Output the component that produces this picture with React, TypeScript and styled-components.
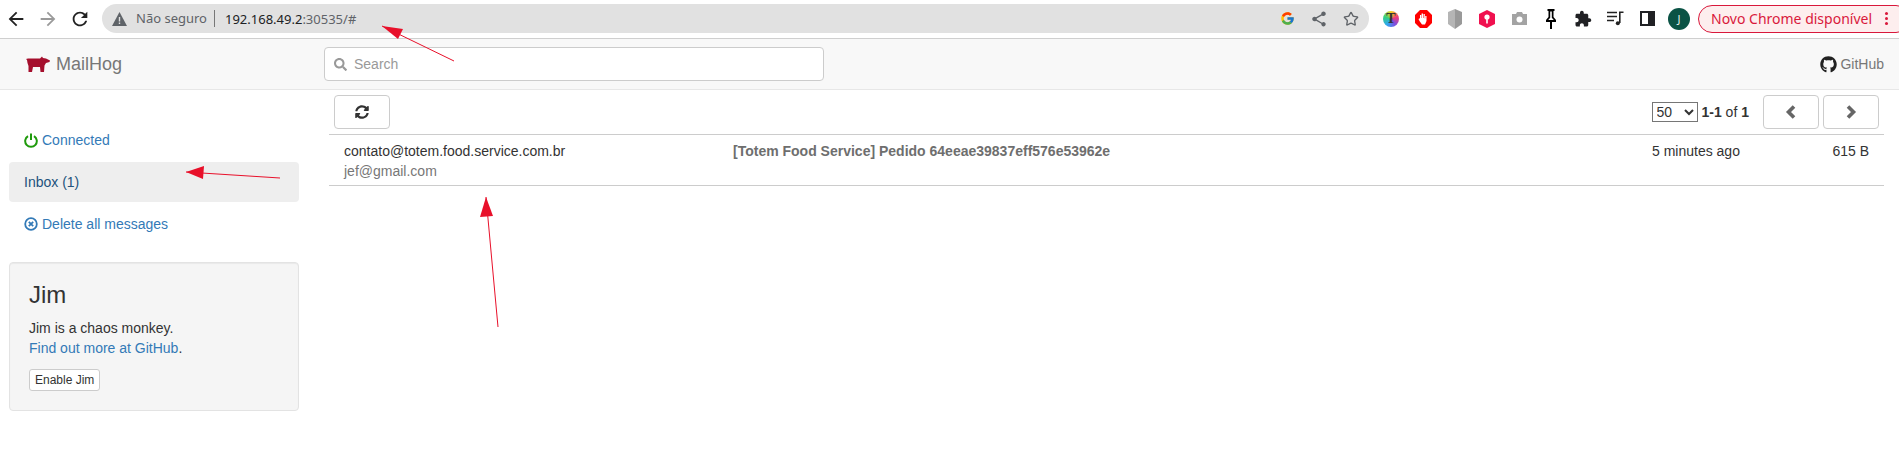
import React from 'react';
import styled, { createGlobalStyle } from 'styled-components';
import { FaGithub, FaSearch, FaSyncAlt } from 'react-icons/fa';
import { FcGoogle } from 'react-icons/fc';
import { Star } from 'lucide-react';

const GlobalStyle = createGlobalStyle`
    html, body {
        margin: 0;
        background: #fff;
        overflow: hidden;
    }
    * {
        box-sizing: border-box;
    }
`;

const Page = styled.div`
    position: relative;
    width: 1899px;
    height: 461px;
    overflow: hidden;
    font-family: "Liberation Sans", Arial, sans-serif;
    font-size: 14px;
    line-height: 20px;
    color: #333;
`;

const ChromeBar = styled.div`
    display: flex;
    align-items: center;
    height: 39px;
    padding-bottom: 1px;
    background: #fff;
    border-bottom: 1px solid #cfcfcf;
    font-family: "Noto Sans", sans-serif;
    font-size: 13px;
    overflow: hidden;
`;

const Slot = styled.div<{ $color?: string }>`
    flex: 0 0 32px;
    height: 32px;
    display: flex;
    align-items: center;
    justify-content: center;
    color: ${p => p.$color || '#222'};
`;

const Omnibox = styled.div`
    flex: 0 0 1267px;
    height: 29px;
    margin: 0 6px;
    padding: 0 2px 0 10px;
    display: flex;
    align-items: center;
    border-radius: 15px;
    background: #e1e1e1;
    color: #5f6368;
`;

const NotSecure = styled.span`
    margin-left: 9px;
    width: 79px;
    border-right: 1px solid #777;
    line-height: 17px;
    white-space: nowrap;
`;

const Url = styled.span`
    margin-left: 10px;
    color: #5f6368;
    b {
        font-weight: 400;
        color: #202124;
    }
`;

const OmniActions = styled.div`
    margin-left: auto;
    display: flex;
    align-items: center;
    color: #5f6368;
`;

const Rainbow = styled.div`
    width: 16px;
    height: 16px;
    border-radius: 50%;
    display: flex;
    align-items: center;
    justify-content: center;
    background: conic-gradient(#f5d020, #ef3a7a, #7b4fe0, #2fa8f0, #35d07f, #f5d020);
    color: #333;
    font: 700 14px "Liberation Serif", serif;
`;

const Avatar = styled.div`
    width: 22px;
    height: 22px;
    border-radius: 50%;
    background: #0b5345;
    color: #e6efe9;
    font-size: 11px;
    display: flex;
    align-items: center;
    justify-content: center;
`;

const UpdatePill = styled.div`
    flex: 0 0 212px;
    height: 28px;
    margin-left: 3px;
    padding-left: 12px;
    display: flex;
    align-items: center;
    border: 1px solid #d9183b;
    border-radius: 14px;
    background: #fdeeee;
    color: #d9183b;
    font-size: 14px;
    white-space: nowrap;
    position: relative;
`;

const PillDots = styled.span`
    margin-left: 13px;
    width: 3px;
    height: 3px;
    border-radius: 50%;
    background: #d9183b;
    box-shadow: 0 -5px 0 #d9183b, 0 5px 0 #d9183b;
`;

const NavBar = styled.div`
    height: 51px;
    display: flex;
    align-items: center;
    padding: 0 15px 0 26px;
    background: #f8f8f8;
    border-bottom: 1px solid #e7e7e7;
`;

const Brand = styled.div`
    width: 298px;
    display: flex;
    align-items: center;
    gap: 6px;
    color: #777;
    font-size: 18px;
`;

const SearchBox = styled.div`
    width: 500px;
    height: 34px;
    padding: 0 9px;
    display: flex;
    align-items: center;
    gap: 7px;
    background: #fff;
    border: 1px solid #ccc;
    border-radius: 4px;
    color: #999;
`;

const GithubLink = styled.a`
    margin-left: auto;
    display: flex;
    align-items: center;
    gap: 3px;
    color: #777;
    svg {
        color: #222;
    }
`;

const Body = styled.div`
    display: flex;
`;

const Sidebar = styled.aside`
    flex: 0 0 329px;
    padding: 30px 30px 0 9px;
`;

const SideItem = styled.div<{ $active?: boolean }>`
    height: 40px;
    margin-bottom: 2px;
    padding: 0 15px;
    display: flex;
    align-items: center;
    gap: 4px;
    border-radius: 4px;
    background: ${p => (p.$active ? '#eee' : 'transparent')};
    color: ${p => (p.$active ? '#23527c' : '#337ab7')};
`;

const JimCard = styled.div`
    height: 149px;
    margin-top: 18px;
    padding: 19px;
    background: #f5f5f5;
    border: 1px solid #e3e3e3;
    border-radius: 4px;
    box-shadow: inset 0 1px 1px rgba(0, 0, 0, .05);
`;

const JimTitle = styled.h3`
    margin: 0 0 10px;
    font-size: 24px;
    font-weight: 500;
    line-height: 26px;
`;

const JimText = styled.p`
    margin: 0 0 11px;
    a {
        color: #337ab7;
    }
`;

const JimButton = styled.button`
    height: 22px;
    padding: 1px 5px;
    background: #fff;
    border: 1px solid #ccc;
    border-radius: 3px;
    color: #333;
    font: 12px/18px "Liberation Sans", Arial, sans-serif;
`;

const Main = styled.main`
    flex: 0 0 1555px;
`;

const Toolbar = styled.div`
    height: 45px;
    padding: 5px 5px 0 5px;
    display: flex;
    align-items: flex-start;
    border-bottom: 1px solid #ccc;
`;

const IconButton = styled.button`
    width: 56px;
    height: 34px;
    display: flex;
    align-items: center;
    justify-content: center;
    background: #fff;
    border: 1px solid #ccc;
    border-radius: 4px;
    color: #333;
    padding: 0;
`;

const Pager = styled.div`
    margin-left: auto;
    display: flex;
    align-items: center;
    height: 34px;
`;

const PageSize = styled.select`
    width: 46px;
    height: 20px;
    margin-right: 4px;
    background: #fff;
    font: 14px "Liberation Sans", Arial, sans-serif;
    color: #333;
`;

const PageCount = styled.span`
    margin-right: 14px;
`;

const NextButton = styled(IconButton)`
    margin-left: 4px;
`;

const MessageRow = styled.div`
    height: 51px;
    padding: 6px 15px 0 15px;
    display: grid;
    grid-template-columns: 389px 919px 1fr auto;
    border-bottom: 1px solid #ccc;
`;

const Recipient = styled.div`
    color: #777;
`;

const Subject = styled.div`
    font-weight: 700;
    color: #6e6e6e;
`;

const Arrows = styled.svg`
    position: absolute;
    inset: 0;
    pointer-events: none;
`;

function MaterialIcon({ d, size, color = 'currentColor' }: { d: string; size: number; color?: string }) {
    return <svg width={size} height={size} viewBox="0 0 24 24" fill={color}><path d={d} /></svg>;
}

const ICONS = {
    back: 'M20 11H7.83l5.59-5.59L12 4l-8 8 8 8 1.41-1.41L7.83 13H20v-2z',
    forward: 'M12 4l-1.41 1.41L16.17 11H4v2h12.17l-5.58 5.59L12 20l8-8z',
    reload: 'M17.65 6.35C16.2 4.9 14.21 4 12 4c-4.42 0-7.99 3.58-7.99 8s3.57 8 7.99 8c3.73 0 6.84-2.55 7.73-6h-2.08c-.82 2.33-3.04 4-5.65 4-3.31 0-6-2.69-6-6s2.69-6 6-6c1.66 0 3.14.69 4.22 1.78L13 11h7V4l-2.35 2.35z',
    share: 'M18 16.08c-.76 0-1.44.3-1.96.77L8.91 12.7c.05-.23.09-.46.09-.7s-.04-.47-.09-.7l7.05-4.11c.54.5 1.25.81 2.04.81 1.66 0 3-1.34 3-3s-1.34-3-3-3-3 1.34-3 3c0 .24.04.47.09.7L8.04 9.81C7.5 9.31 6.79 9 6 9c-1.66 0-3 1.34-3 3s1.34 3 3 3c.79 0 1.5-.31 2.04-.81l7.12 4.16c-.05.21-.08.43-.08.65 0 1.61 1.31 2.92 2.92 2.92s2.92-1.31 2.92-2.92-1.31-2.92-2.92-2.92z',
    extension: 'M20.5 11H19V7c0-1.1-.9-2-2-2h-4V3.5C13 2.12 11.88 1 10.5 1S8 2.12 8 3.5V5H4c-1.1 0-1.99.9-1.99 2v3.8H3.5c1.49 0 2.7 1.21 2.7 2.7s-1.21 2.7-2.7 2.7H2V20c0 1.1.9 2 2 2h3.8v-1.5c0-1.49 1.21-2.7 2.7-2.7 1.49 0 2.7 1.21 2.7 2.7V22H17c1.1 0 2-.9 2-2v-4h1.5c1.38 0 2.5-1.12 2.5-2.5S21.88 11 20.5 11z',
};

function Pig() {
    return <svg width="24" height="16" viewBox="0 0 24 16" fill="#a50f2d">
        <path d="M0 3 L2 2.5 H14 L16 .5 L17 2 L20 2.5 L24 4.5 L23.5 6 L20 7 L18.5 9.5 L18 16 H14.5 L14 11 H7 L6 16 H2.5 L2.5 10 L1.5 7 L1 4 Z" />
    </svg>;
}

function PowerIcon() {
    return <svg width="14" height="15" viewBox="0 0 14 15" fill="none" stroke="#1f9a0c" strokeWidth="2">
        <path d="M4 3.1 A5.8 5.8 0 1 0 10 3.1" />
        <path d="M7 .5 V7" />
    </svg>;
}

function DeleteIcon() {
    return <svg width="14" height="14" viewBox="0 0 14 14" fill="none" stroke="#337ab7">
        <circle cx="7" cy="7" r="5.8" strokeWidth="1.8" />
        <path d="M4.8 4.8 L9.2 9.2 M9.2 4.8 L4.8 9.2" strokeWidth="1.8" />
    </svg>;
}

function WarningIcon() {
    return <svg width="15" height="14" viewBox="0 0 15 14" fill="#5f6368">
        <path d="M7.5 0 L15 14 H0 Z" />
        <path d="M6.8 5 H8.2 V9.5 H6.8 Z M6.8 10.5 H8.2 V12 H6.8 Z" fill="#e1e1e1" />
    </svg>;
}

function StopIcon() {
    return <svg width="17" height="18" viewBox="0 0 17 18">
        <path d="M5 0 H12 L17 5 V13 L12 18 H5 L0 13 V5 Z" fill="#f00" />
        <path d="M5 8 V5 H6.2 V8 H6.6 V3.5 H8 V8 H8.5 V4 H9.8 V8.5 H10.2 V6 H11.5 V11 L10 14.5 H7 L4.5 11 L3.5 9 L4.5 8.5 Z" fill="#fff" />
    </svg>;
}

function ShieldIcon() {
    return <svg width="14" height="20" viewBox="0 0 14 20">
        <path d="M7 0 L14 3 V15 L7 20 Z" fill="#999" />
        <path d="M7 0 L0 3 V15 L7 20 Z" fill="#b5b5b5" />
    </svg>;
}

function KeyIcon() {
    return <svg width="16" height="18" viewBox="0 0 16 18">
        <path d="M8 0 L16 4 V14 L8 18 L0 14 V4 Z" fill="#f0114f" />
        <circle cx="8" cy="7" r="2.6" fill="#fff" />
        <path d="M7.2 8 H8.8 V13.5 H7.2 Z" fill="#fff" />
    </svg>;
}

function CameraIcon() {
    return <svg width="17" height="15" viewBox="0 0 17 15">
        <path d="M1 3 H5 L6 1 H11 L12 3 H16 V14 H1 Z" fill="#a3a3a3" />
        <circle cx="8.5" cy="8.5" r="3" fill="#fff" />
    </svg>;
}

function PinIcon() {
    return <svg width="12" height="20" viewBox="0 0 12 20" fill="#000">
        <path d="M2.5 0 H9.5 V2 H8.5 V8 L11 11 V13 H7 V20 H5 V13 H1 V11 L3.5 8 V2 H2.5 Z M5.2 2.5 V8.7 L3.2 11 H8.8 L6.8 8.7 V2.5 Z" fillRule="evenodd" />
    </svg>;
}

function QueueIcon() {
    return <svg width="17" height="15" viewBox="0 0 17 15" fill="none" stroke="#222" strokeWidth="1.6">
        <path d="M0 1.5 H10 M0 5.5 H10 M0 9.5 H7 M12.8 12 V1.2 H16.5" />
        <circle cx="10.8" cy="12.2" r="2" fill="#222" stroke="none" />
    </svg>;
}

function PanelIcon() {
    return <svg width="15" height="15" viewBox="0 0 15 15">
        <path d="M0 0 H15 V15 H0 Z M2 2 V13 H8 V2 Z" fill="#202124" fillRule="evenodd" />
    </svg>;
}

function Chevron({ points }: { points: string }) {
    return <svg width="12" height="14" viewBox="0 0 12 14" fill="none" stroke="#666" strokeWidth="3.6">
        <polyline points={points} />
    </svg>;
}

function RedArrow({ from, tip, base }: { from: string; tip: string; base: string }) {
    return <>
        <polyline points={`${from} ${tip}`} stroke="#e8102a" strokeWidth="1" fill="none" />
        <polygon points={`${tip} ${base}`} fill="#e8102a" />
    </>;
}

export default function App() {
    return <Page>
        <GlobalStyle />
        <ChromeBar>
            <Slot><MaterialIcon d={ICONS.back} size={22} /></Slot>
            <Slot $color="#9a9a9a"><MaterialIcon d={ICONS.forward} size={22} /></Slot>
            <Slot><MaterialIcon d={ICONS.reload} size={22} /></Slot>
            <Omnibox>
                <WarningIcon />
                <NotSecure>Não seguro</NotSecure>
                <Url><b>192.168.49.2</b>:30535/#</Url>
                <OmniActions>
                    <Slot><FcGoogle size={15} /></Slot>
                    <Slot $color="#5f6368"><MaterialIcon d={ICONS.share} size={18} /></Slot>
                    <Slot $color="#5f6368"><Star size={16} strokeWidth={2} /></Slot>
                </OmniActions>
            </Omnibox>
            <Slot><Rainbow>T</Rainbow></Slot>
            <Slot><StopIcon /></Slot>
            <Slot><ShieldIcon /></Slot>
            <Slot><KeyIcon /></Slot>
            <Slot><CameraIcon /></Slot>
            <Slot><PinIcon /></Slot>
            <Slot $color="#202124"><MaterialIcon d={ICONS.extension} size={18} /></Slot>
            <Slot><QueueIcon /></Slot>
            <Slot><PanelIcon /></Slot>
            <Slot><Avatar>J</Avatar></Slot>
            <UpdatePill>Novo Chrome disponível<PillDots /></UpdatePill>
        </ChromeBar>
        <NavBar>
            <Brand><Pig />MailHog</Brand>
            <SearchBox><FaSearch size={13} />Search</SearchBox>
            <GithubLink><FaGithub size={17} />GitHub</GithubLink>
        </NavBar>
        <Body>
            <Sidebar>
                <SideItem><PowerIcon />Connected</SideItem>
                <SideItem $active>Inbox (1)</SideItem>
                <SideItem><DeleteIcon />Delete all messages</SideItem>
                <JimCard>
                    <JimTitle>Jim</JimTitle>
                    <JimText>Jim is a chaos monkey.<br /><a>Find out more at GitHub</a>.</JimText>
                    <JimButton>Enable Jim</JimButton>
                </JimCard>
            </Sidebar>
            <Main>
                <Toolbar>
                    <IconButton><FaSyncAlt size={14} /></IconButton>
                    <Pager>
                        <PageSize defaultValue="50"><option>50</option></PageSize>
                        <PageCount><b>1-1</b> of <b>1</b></PageCount>
                        <IconButton><Chevron points="9,1.5 3.5,7 9,12.5" /></IconButton>
                        <NextButton><Chevron points="3,1.5 8.5,7 3,12.5" /></NextButton>
                    </Pager>
                </Toolbar>
                <MessageRow>
                    <div>contato@totem.food.service.com.br<Recipient>jef@gmail.com</Recipient></div>
                    <Subject>[Totem Food Service] Pedido 64eeae39837eff576e53962e</Subject>
                    <div>5 minutes ago</div>
                    <div>615 B</div>
                </MessageRow>
            </Main>
        </Body>
        <Arrows width="1899" height="461">
            <RedArrow from="454,61" tip="382,26" base="398,39 403,29" />
            <RedArrow from="280,178" tip="186,172" base="204,166 203,179" />
            <RedArrow from="498,327" tip="486,197" base="480,217 493,216" />
        </Arrows>
    </Page>;
}
